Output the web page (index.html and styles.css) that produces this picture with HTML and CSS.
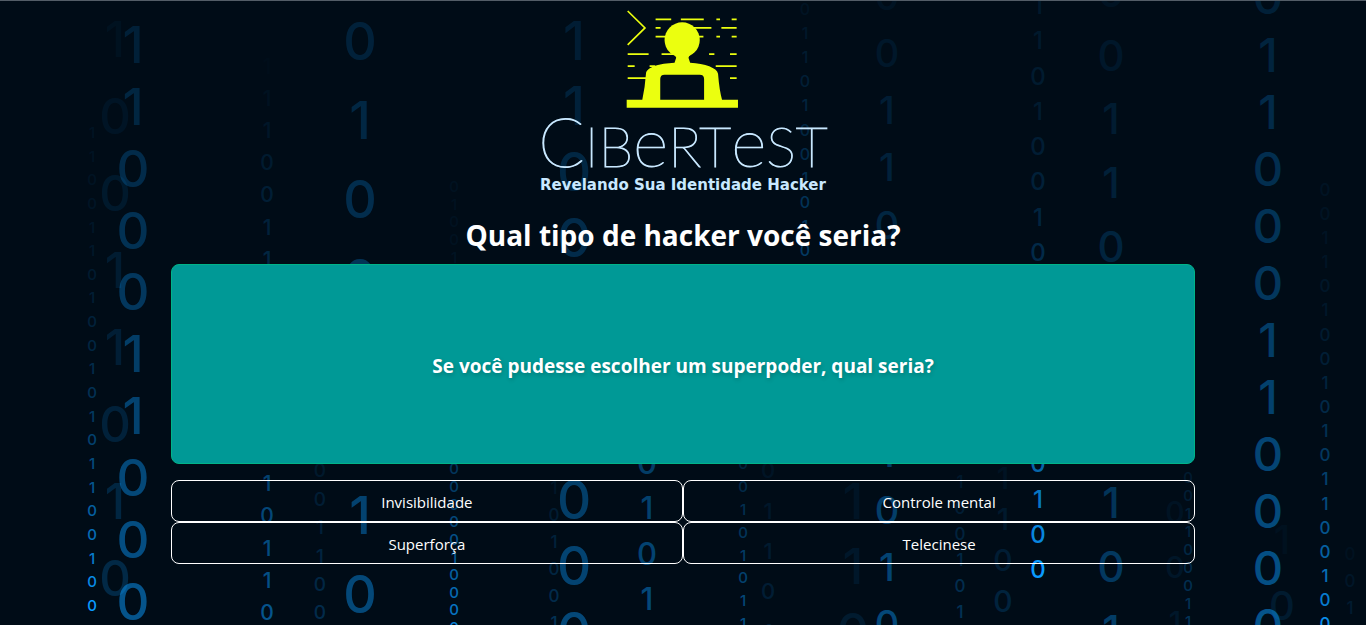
FILE: index.html
```html
<!DOCTYPE html>
<html lang="pt-BR">
<head>
  <meta charset="utf-8">
  <meta name="viewport" content="width=device-width, initial-scale=1">
  <title>Cibertest</title>
  <link rel="stylesheet" href="styles.css">
</head>
<body>
  <svg class="rain" viewBox="0 0 1366 625" preserveAspectRatio="xMidYMid slice" aria-hidden="true"></svg>
  <main class="page">
    <header class="brand">
      <svg class="brand-icon" viewBox="20 30 338 295" aria-hidden="true">
        <g fill="none" stroke="#ebff0f" stroke-width="5">
          <path d="M24 33 76 84 24 135"/>
          <path d="M108 58h47M184 58h69M291 58h11M337 58h15"/>
          <path d="M108 84h15M220 84h56M306 84h46"/>
          <path d="M108 110h40M230 110h22M291 110h11M337 110h15"/>
          <path d="M24 163h63M126 163h40M269 163h16M332 163h20"/>
          <path d="M24 199h21M90 199h17M289 199h63"/>
          <path d="M24 235h60M332 235h20"/>
        </g>
        <g fill="#ebff0f">
          <circle cx="188" cy="120" r="53"/>
          <path d="M21 300H68Q76 265 79 222C81 202 120 191 165 189L170 174 164 160H213L207 174 212 189C257 192 293 204 296 222Q300 272 308 300H356V324H21ZM122 300H254V238Q254 225 241 225H135Q122 225 122 238Z" fill-rule="evenodd"/>
        </g>
      </svg>
      <p class="brand-name"><span class="tall">C</span>IB<span class="tall">e</span>RT<span class="tall">e</span>ST</p>
      <p class="brand-tag">Revelando Sua Identidade Hacker</p>
    </header>
    <h1 class="title">Qual tipo de hacker você seria?</h1>
    <section class="quiz">
      <h2 class="question" id="question">Se você pudesse escolher um superpoder, qual seria?</h2>
      <div class="options" role="group" aria-labelledby="question">
        <button class="option" type="button">Invisibilidade</button>
        <button class="option" type="button">Controle mental</button>
        <button class="option" type="button">Superforça</button>
        <button class="option" type="button">Telecinese</button>
      </div>
    </section>
  </main>
  <script src="rain.js"></script>
</body>
</html>
```

FILE: styles.css
```css
* {
  box-sizing: border-box;
}

body {
  position: relative;
  min-height: 100vh;
  margin: 0;
  overflow-x: hidden;
  border-top: 1px solid #535d67;
  background: #000c17;
  color: #fff;
  font-family: "Open Sans", "Noto Sans", sans-serif;
}

.rain {
  position: absolute;
  inset: 0;
  z-index: -1;
  width: 100%;
  height: 100%;
  font-family: Inter, Roboto, sans-serif;
  font-weight: 500;
  text-anchor: middle;
  fill: #0a9bff;
}

.page {
  display: flex;
  flex-direction: column;
  align-items: center;
}

.brand {
  display: flex;
  flex-direction: column;
  align-items: center;
  padding-top: 9px;
  color: #c8e8ff;
}

.brand-icon {
  width: 113px;
  height: 98px;
}

.brand-name {
  margin: 0;
  padding-top: 6px;
  font-family: Lato, sans-serif;
  font-size: 56px;
  font-weight: 200;
  line-height: 62px;
  white-space: nowrap;
  -webkit-text-stroke: 1px #c8e8ff;
}

.tall {
  font-size: 68px;
  line-height: 54px;
}

.brand-tag {
  margin: 0;
  font-family: "DejaVu Sans", sans-serif;
  font-size: 15px;
  font-weight: 700;
  line-height: 16px;
}

.title {
  margin: 22px 0 9px;
  font-size: 28px;
  line-height: 40px;
  text-align: center;
}

.quiz {
  display: grid;
  gap: 16px;
  width: 75%;
}

.question {
  display: grid;
  place-items: center;
  min-height: 200px;
  margin: 0;
  padding: 20px 16px 16px;
  border: 1px solid #00b489;
  border-radius: 8px;
  background: #009996;
  font-size: 19px;
  line-height: 28px;
  text-align: center;
  text-shadow: 1px 2px 4px rgba(0, 0, 0, 0.2);
}

.options {
  display: grid;
  grid-template-columns: 1fr 1fr;
}

.option {
  padding: 9px 16px 7px;
  border: 1px solid #fff;
  border-radius: 8px;
  background: transparent;
  color: #fff;
  font-family: inherit;
  font-size: 15px;
  line-height: 24px;
  cursor: pointer;
}
```

FILE: rain.js
```js
// Each column: centre x, font size, centre y of the first digit, pitch, digits, opacity at top and bottom.
const columns = [
  [92, 15, 132, 23.65, "110011010010101100100", 0.05, 1],
  [133, 51, 44, 61.9, "1100011000", 0.14, 0.5],
  [115, 49, 39, 77, "10011010", 0.04, 0.2],
  [267, 21, 66, 32.1, "111001101001010110", 0.01, 0.5],
  [320, 19, 470, 28.4, "001100", 0.09, 0.22],
  [360, 52, 41, 79, "01001010", 0.15, 0.42],
  [454, 15, 186, 17.65, "01001101001011010000010000", 0.04, 0.8],
  [554, 17, 487, 27, "101001", 0.07, 0.26],
  [574, 53, 40, 65.7, "1100101000", 0.12, 0.42],
  [647, 31, 462, 45.5, "0101", 0.34, 0.42],
  [743, 15, 463, 22.9, "00101011", 0.16, 0.45],
  [768, 22, 470, 40.3, "01101", 0.06, 0.14],
  [805, 16, 9, 24.05, "01101001010", 0.05, 0.32],
  [853, 50, 500, 65, "110", 0.06, 0.1],
  [887, 38, -4, 57.1, "001100101010", 0.05, 0.42],
  [960, 17, 481, 26, "100101", 0.09, 0.26],
  [1003, 30, 478, 41, "1100", 0.05, 0.16],
  [1038, 24, 5, 35.25, "11010010011010100", 0.09, 1],
  [1111, 42, -9, 63.9, "00110010101", 0.05, 0.34],
  [1175, 30, 512, 55, "001", 0.05, 0.08],
  [1188, 15, 477, 18, "001100011", 0.1, 0.28],
  [1268, 47, -3, 57.1, "011000110000", 0.14, 0.5],
  [1282, 40, 539, 66, "10", 0.03, 0.1],
  [1325, 17, 189, 24.15, "0011010010101100100", 0.05, 0.9],
  [1350, 17, 553, 27, "001", 0.04, 0.1],
];

const rain = document.querySelector(".rain");
for (const [x, size, top, pitch, digits, from, to] of columns) {
  // Bright columns stay faint for most of their length and flare at the leading end.
  const curve = to > 0.7 ? 2.5 : 1;
  [...digits].forEach((digit, i) => {
    const t = i / (digits.length - 1);
    const glyph = document.createElementNS("http://www.w3.org/2000/svg", "text");
    glyph.setAttribute("x", x);
    glyph.setAttribute("y", Math.floor(top + i * pitch + size * 0.36));
    glyph.setAttribute("font-size", size);
    glyph.setAttribute("opacity", (from + (to - from) * t ** curve).toFixed(2));
    glyph.textContent = digit;
    rain.append(glyph);
  });
}
```
